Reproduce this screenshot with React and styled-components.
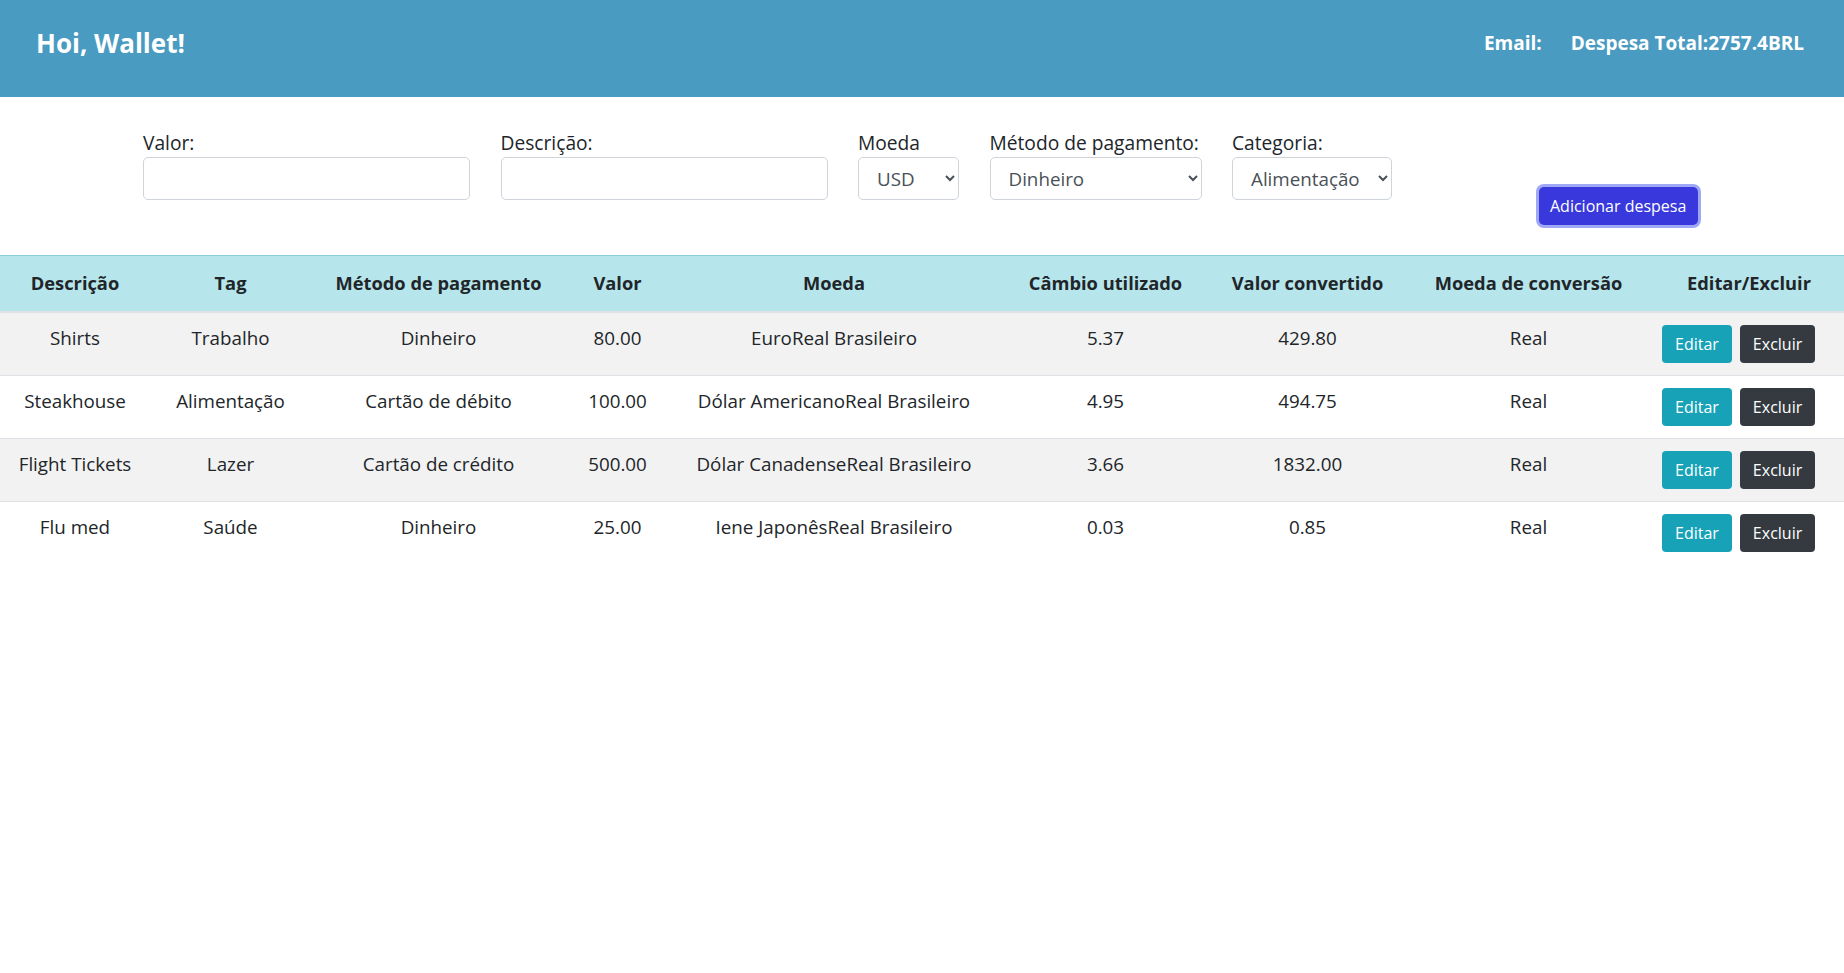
import React from "react";
import styled, { createGlobalStyle } from "styled-components";

const GlobalStyle = createGlobalStyle`
  * { box-sizing: border-box; }
  body {
    margin: 0;
    background: #fff;
    color: #212529;
    font-family: "Open Sans", "Noto Sans", sans-serif;
    font-size: 18.8px;
    line-height: 28px;
  }
`;

const expenses = [
  { desc: "Shirts", tag: "Trabalho", method: "Dinheiro", value: "80.00", currency: "EuroReal Brasileiro", rate: "5.37", converted: "429.80" },
  { desc: "Steakhouse", tag: "Alimentação", method: "Cartão de débito", value: "100.00", currency: "Dólar AmericanoReal Brasileiro", rate: "4.95", converted: "494.75" },
  { desc: "Flight Tickets", tag: "Lazer", method: "Cartão de crédito", value: "500.00", currency: "Dólar CanadenseReal Brasileiro", rate: "3.66", converted: "1832.00" },
  { desc: "Flu med", tag: "Saúde", method: "Dinheiro", value: "25.00", currency: "Iene JaponêsReal Brasileiro", rate: "0.03", converted: "0.85" },
];

// largura de cada coluna da tabela
const columns = [
  { title: "Descrição", width: 150 },
  { title: "Tag", width: 161 },
  { title: "Método de pagamento", width: 255 },
  { title: "Valor", width: 103 },
  { title: "Moeda", width: 330 },
  { title: "Câmbio utilizado", width: 213 },
  { title: "Valor convertido", width: 191 },
  { title: "Moeda de conversão", width: 251 },
  { title: "Editar/Excluir", width: 190 },
];

export default function App() {
  return (
    <>
      <GlobalStyle />
      <Header>
        <Greeting>Hoi, Wallet!</Greeting>
        <HeaderInfo>
          <span>Email:</span>
          <span>Despesa Total:2757.4BRL</span>
        </HeaderInfo>
      </Header>

      <Form onSubmit={(e) => e.preventDefault()}>
        <Field>
          Valor:
          <Input type="text" width={327} />
        </Field>
        <Field>
          Descrição:
          <Input type="text" width={327} />
        </Field>
        <Field>
          Moeda
          <Select width={101} defaultValue="USD">
            <option>USD</option>
            <option>CAD</option>
            <option>EUR</option>
          </Select>
        </Field>
        <Field>
          Método de pagamento:
          <Select width={212} defaultValue="Dinheiro">
            <option>Dinheiro</option>
            <option>Cartão de crédito</option>
            <option>Cartão de débito</option>
          </Select>
        </Field>
        <Field>
          Categoria:
          <Select width={160} defaultValue="Alimentação">
            <option>Alimentação</option>
            <option>Lazer</option>
            <option>Trabalho</option>
            <option>Transporte</option>
            <option>Saúde</option>
          </Select>
        </Field>
        <AddButton type="submit">Adicionar despesa</AddButton>
      </Form>

      <Table>
        <colgroup>
          {columns.map((c) => (
            <col key={c.title} style={{ width: c.width }} />
          ))}
        </colgroup>
        <thead>
          <tr>
            {columns.map((c) => (
              <Th key={c.title}>{c.title}</Th>
            ))}
          </tr>
        </thead>
        <tbody>
          {expenses.map((item) => (
            <Row key={item.desc}>
              <Td>{item.desc}</Td>
              <Td>{item.tag}</Td>
              <Td>{item.method}</Td>
              <Td>{item.value}</Td>
              <Td>{item.currency}</Td>
              <Td>{item.rate}</Td>
              <Td>{item.converted}</Td>
              <Td>Real</Td>
              <ActionCell>
                <ActionButton variant="info">Editar</ActionButton>
                <ActionButton variant="dark">Excluir</ActionButton>
              </ActionCell>
            </Row>
          ))}
        </tbody>
      </Table>
    </>
  );
}

const Header = styled.header`
  height: 97px;
  background-color: #4a9bc1;
  color: #fff;
  display: flex;
  align-items: center;
  justify-content: space-between;
  padding: 0 40px 11px 36px;
`;

const Greeting = styled.h1`
  margin: 0;
  font-size: 26px;
  font-weight: 700;
  line-height: 34px;
`;

const HeaderInfo = styled.div`
  display: flex;
  gap: 29px;
  font-size: 19px;
  font-weight: 700;
`;

const Form = styled.form`
  display: flex;
  align-items: flex-start;
  gap: 30.5px;
  height: 158px;
  padding: 32px 0 0 143px;
`;

const Field = styled.label`
  display: flex;
  flex-direction: column;
  font-size: 19.2px;
  line-height: 28px;
  color: #212529;
`;

const Input = styled.input`
  width: ${(p) => p.width}px;
  height: 43px;
  border: 1px solid #ced4da;
  border-radius: 5px;
  padding: 0 14px;
  font: inherit;
  font-size: 18.8px;
  color: #495057;
  background: #fff;
`;

const Select = styled.select`
  width: ${(p) => p.width}px;
  height: 43px;
  border: 1px solid #ced4da;
  border-radius: 5px;
  padding: 0 4px 0 14px;
  font: inherit;
  font-size: 18.8px;
  color: #495057;
  background-color: #fff;
`;

const AddButton = styled.button`
  margin: 58px 0 0 116px;
  height: 38px;
  padding: 0 11.5px;
  border: none;
  border-radius: 5px;
  background-color: #3838dc;
  color: #fff;
  font-family: inherit;
  font-size: 16px;
  box-shadow: 0 0 0 3px #9ea8f6;
  cursor: pointer;
`;

const Table = styled.table`
  width: 100%;
  table-layout: fixed;
  border-collapse: collapse;
  text-align: center;
`;

const Th = styled.th`
  background-color: #b6e6eb;
  border-top: 1px solid #86cfda;
  border-bottom: 2px solid #dee2e6;
  padding: 13px 2px 14px;
  font-weight: 700;
  font-size: 18.3px;
  line-height: 28px;
  white-space: nowrap;
`;

const Row = styled.tr`
  &:nth-child(odd) {
    background-color: #f2f2f2;
  }
  & + & td {
    border-top: 1px solid #dee2e6;
  }
`;

const Td = styled.td`
  padding: 11px 2px 12px;
  vertical-align: top;
  line-height: 28px;
  white-space: nowrap;
`;

const ActionCell = styled(Td)`
  text-align: left;
  padding-left: 8px;
`;

const ActionButton = styled.button`
  display: inline-flex;
  align-items: center;
  height: 38px;
  margin: 1px 8px 0 0;
  padding: 0 13px;
  border: none;
  border-radius: 4px;
  font-family: inherit;
  font-size: 16px;
  color: #fff;
  background-color: ${(p) => (p.variant === "info" ? "#17a2b8" : "#343a40")};
  vertical-align: top;
  cursor: pointer;
`;
